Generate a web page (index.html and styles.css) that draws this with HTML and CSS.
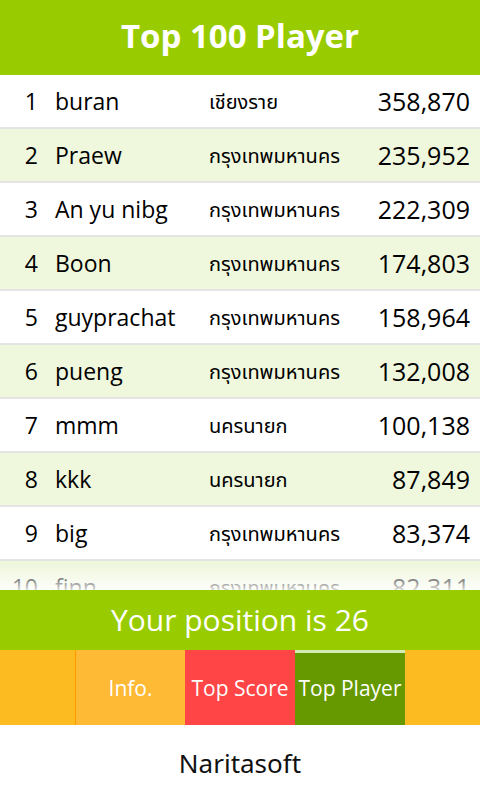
FILE: index.html
```html
<!DOCTYPE html>
<html>
<head>
<meta charset="utf-8">
<link rel="stylesheet" href="styles.css">
</head>
<body>
<div class="app">
  <header class="title">Top 100 Player</header>
  <div class="list">
    <div class="row"><span class="rank">1</span><span class="name">buran</span><span class="city">เชียงราย</span><span class="score">358,870</span></div>
    <div class="row"><span class="rank">2</span><span class="name">Praew</span><span class="city">กรุงเทพมหานคร</span><span class="score">235,952</span></div>
    <div class="row"><span class="rank">3</span><span class="name">An yu nibg</span><span class="city">กรุงเทพมหานคร</span><span class="score">222,309</span></div>
    <div class="row"><span class="rank">4</span><span class="name">Boon</span><span class="city">กรุงเทพมหานคร</span><span class="score">174,803</span></div>
    <div class="row"><span class="rank">5</span><span class="name">guyprachat</span><span class="city">กรุงเทพมหานคร</span><span class="score">158,964</span></div>
    <div class="row"><span class="rank">6</span><span class="name">pueng</span><span class="city">กรุงเทพมหานคร</span><span class="score">132,008</span></div>
    <div class="row"><span class="rank">7</span><span class="name">mmm</span><span class="city">นครนายก</span><span class="score">100,138</span></div>
    <div class="row"><span class="rank">8</span><span class="name">kkk</span><span class="city">นครนายก</span><span class="score">87,849</span></div>
    <div class="row"><span class="rank">9</span><span class="name">big</span><span class="city">กรุงเทพมหานคร</span><span class="score">83,374</span></div>
    <div class="row"><span class="rank">10</span><span class="name">finn</span><span class="city">กรุงเทพมหานคร</span><span class="score">82,311</span></div>
    <div class="fade"></div>
  </div>
  <div class="position">Your position is 26</div>
  <nav class="tabs">
    <div class="tab side left"></div>
    <div class="tab info">Info.</div>
    <div class="tab score-tab">Top Score</div>
    <div class="tab player active">Top Player</div>
    <div class="tab side"></div>
  </nav>
  <footer class="footer">Naritasoft</footer>
</div>
</body>
</html>
```
FILE: styles.css
```css
* { box-sizing: border-box; }
html, body { margin: 0; padding: 0; background: #fff; }
.app {
  width: 480px;
  height: 800px;
  display: flex;
  flex-direction: column;
  font-family: "Open Sans", "DejaVu Sans", sans-serif;
  overflow: hidden;
}
.title {
  height: 75px;
  flex: none;
  background: #99cc00;
  color: #fff;
  font-weight: bold;
  font-size: 33px;
  display: flex;
  align-items: center;
  justify-content: center;
  padding-bottom: 4px;
}
.list {
  height: 515px;
  flex: none;
  overflow: hidden;
  position: relative;
}
.row {
  height: 54px;
  border-bottom: 2px solid #e4e4e4;
  display: flex;
  align-items: center;
  color: #000;
  font-size: 23px;
  background: #fff;
}
.row:nth-child(even) { background: #eff7dd; }
.rank { width: 46px; text-align: right; padding-right: 8px; }
.name { width: 154px; padding-left: 9px; }
.city {
  width: 160px;
  padding-left: 9px;
  padding-top: 4px;
  font-family: "Noto Sans Thai", "Loma", "Garuda", "Tlwg Typo", "DejaVu Sans", sans-serif;
  font-size: 20px;
  color: #000;
}
.score { flex: 1; text-align: right; padding-right: 10px; font-size: 25px; }
.fade {
  position: absolute;
  left: 0; right: 0; bottom: 0;
  height: 26px;
  background: linear-gradient(rgba(255,255,255,0), rgba(255,255,255,0.85));
}
.position {
  height: 60px;
  flex: none;
  background: #99cc00;
  color: #fff;
  font-size: 30px;
  display: flex;
  align-items: center;
  justify-content: center;
  padding-bottom: 2px;
}
.tabs {
  height: 75px;
  flex: none;
  display: flex;
  background: #fdbb22;
}
.tab {
  display: flex;
  align-items: center;
  justify-content: center;
  color: #fff;
  font-size: 21px;
  width: 110px;
}
.side { width: 75px; background: #fdbb22; }
.side.left { border-right: 1px solid #ff9900; width: 76px; }
.info { width: 109px; background: #feba34; }
.score-tab { background: #ff4545; }
.player { background: #669900; border-top: 3px solid #d3ecb3; padding-bottom: 3px; }
.footer {
  flex: 1;
  display: flex;
  align-items: center;
  justify-content: center;
  font-size: 26px;
  color: #111;
  font-family: "Noto Sans", "DejaVu Sans", sans-serif;
}
```
